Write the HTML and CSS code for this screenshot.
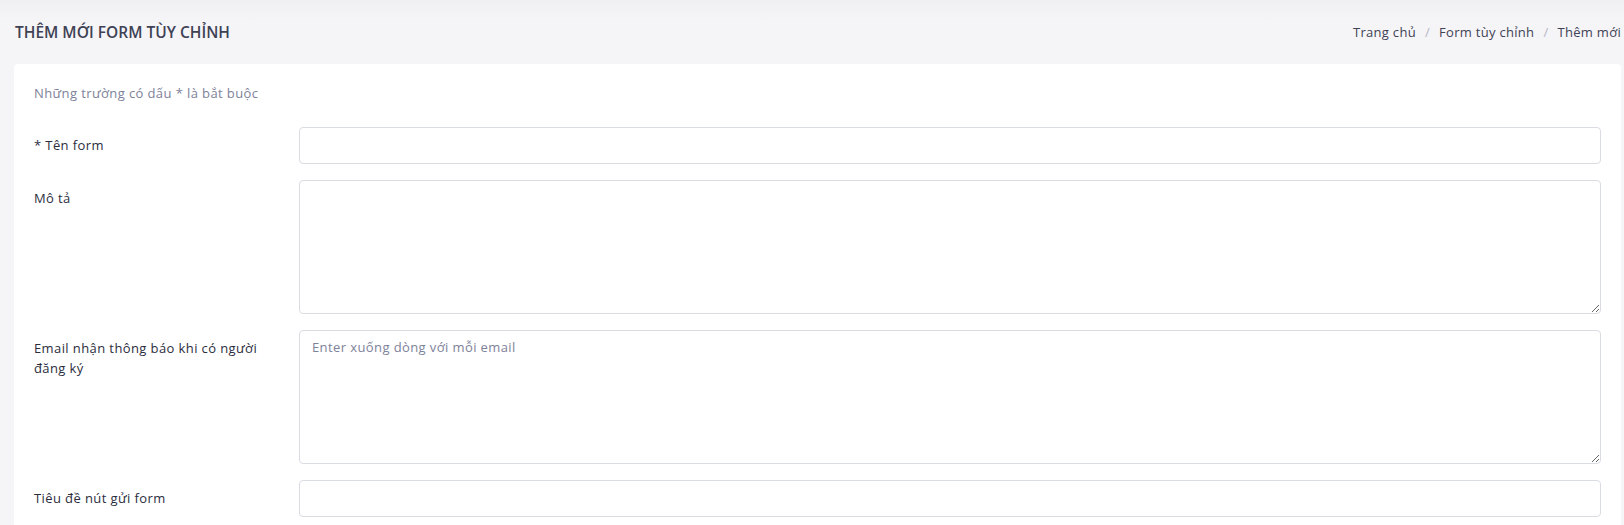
FILE: index.html
```html
<!DOCTYPE html>
<html lang="vi">
  <head>
    <meta charset="UTF-8" />
    <title>Thêm mới form tùy chỉnh</title>
    <link rel="stylesheet" href="styles.css">
  </head>
  <body>
    <div class="page">
      <div class="subheader">
        <h1 class="title">THÊM MỚI FORM TÙY CHỈNH</h1>
        <ul class="breadcrumb">
          <li><a href="#">Trang chủ</a></li>
          <li><a href="#">Form tùy chỉnh</a></li>
          <li>Thêm mới</li>
        </ul>
      </div>

      <div class="card">
        <p class="note">Những trường có dấu * là bắt buộc</p>

        <div class="form-row">
          <label class="label" for="name">* Tên form</label>
          <input class="input" id="name" type="text" />
        </div>
        <div class="form-row">
          <label class="label" for="desc">Mô tả</label>
          <textarea class="input area" id="desc"></textarea>
        </div>
        <div class="form-row">
          <label class="label" for="emails">Email nhận thông báo khi có người đăng ký</label>
          <textarea class="input area" id="emails" placeholder="Enter xuống dòng với mỗi email"></textarea>
        </div>
        <div class="form-row">
          <label class="label" for="submit-title">Tiêu đề nút gửi form</label>
          <input class="input" id="submit-title" type="text" />
        </div>
      </div>
    </div>
  </body>
</html>
```

FILE: styles.css
```css
html {
  font-family: "Open Sans", "Liberation Sans", sans-serif;
}
body {
  margin: 0;
  background-color: #f5f5f8;
  color: #3f4254;
}
.page {
  padding: 0 3px 0 14px;
  background: linear-gradient(to bottom, #f0f0f3 0, #f5f5f8 20px);
}
.subheader {
  display: flex;
  align-items: center;
  justify-content: space-between;
  height: 64px;
  padding-left: 1px;
}
.title {
  margin: 0;
  font-size: 15.5px;
  font-weight: 600;
  color: #3f4254;
}
.breadcrumb {
  display: flex;
  margin: 0;
  padding: 0;
  list-style: none;
  font-size: 13px;
  letter-spacing: 0.3px;
}
.breadcrumb li + li::before {
  content: "/";
  padding: 0 9px;
  color: #b5b5c3;
}
.breadcrumb a {
  color: #3f4254;
  text-decoration: none;
}
.card {
  background-color: #fff;
  border-radius: 4px;
  padding: 19px 20px 8px;
}
.note {
  margin: 0 0 24px;
  font-size: 13px;
  line-height: 20px;
  letter-spacing: 0.4px;
  color: #7e8299;
}
.form-row {
  display: grid;
  grid-template-columns: 265px 1fr;
  margin-bottom: 16px;
}
.label {
  padding: 8px 20px 0 0;
  font-size: 13px;
  line-height: 20px;
  letter-spacing: 0.4px;
  font-weight: 500;
  color: #2b2d3d;
}
.input {
  box-sizing: border-box;
  width: 100%;
  height: 37px;
  margin-right: 1px;
  padding: 6px 12px;
  border: 1px solid #dadce3;
  border-radius: 4px;
  font-family: inherit;
  font-size: 13px;
  line-height: 20px;
  letter-spacing: 0.4px;
  color: #3f4254;
}
.area {
  height: 134px;
  display: block;
}
.input::placeholder {
  color: #7e8299;
}
```
